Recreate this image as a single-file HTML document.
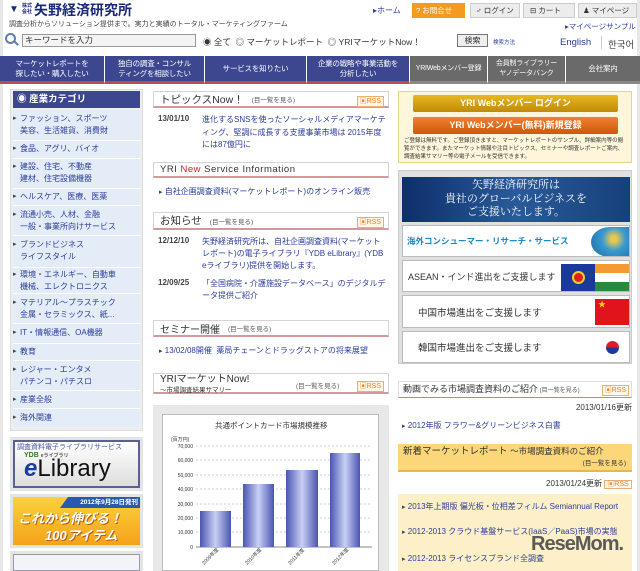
<!DOCTYPE html>
<html><head><meta charset="utf-8">
<style>
*{margin:0;padding:0;box-sizing:border-box}
body{width:640px;height:571px;overflow:hidden;background:#fff;font-family:"Liberation Sans","Noto Sans CJK JP",sans-serif;font-size:9px;color:#333;position:relative}
.a{position:absolute;white-space:nowrap}
a,.lk{color:#2a3d9a;text-decoration:none}
.nav div{position:absolute;top:56px;height:28px;color:#fff;font-size:7.5px;line-height:10px;text-align:center;display:flex;align-items:center;justify-content:center;border-right:1px solid #fff;border-bottom:3px solid #b94c4c;white-space:nowrap;letter-spacing:-.2px}
.blue{background:#3c4790}
.gray{background:#6a6a6a;border-bottom-color:#888!important}
.hd{position:absolute;left:153px;width:236px;background:#fff;border:1px solid #d4d4d4;border-bottom:2px solid #d49a9a;font-size:11px;color:#333;padding-left:6px;display:flex;align-items:center;white-space:nowrap}
.hd small{font-size:6.5px;color:#555;margin-left:8px}
.rss{position:absolute;right:4px;top:4px;font-size:7px;color:#f08020;border:1px solid #e9b070;background:#fff5e8;padding:0 2px;line-height:9px}
.cat{position:absolute;left:13px;width:127px;font-size:8px;color:#2a3d9a;line-height:12px;padding-left:7px;white-space:nowrap}
.cat:before{content:"▸";position:absolute;left:0;color:#444;font-size:7px}
.sep{position:absolute;left:13px;width:127px;height:1px;background:#fff}
.rb{position:absolute;left:402px;width:228px;background:#fff;border:1px solid #bbb;font-size:9.5px;color:#333;display:flex;align-items:center;white-space:nowrap;overflow:hidden}
</style></head><body>
<div class="a" style="left:0;top:0;width:3px;height:571px;background:#e8e8e8"></div>
<div class="a" style="right:0;top:0;width:3px;height:571px;background:#e8e8e8"></div>

<!-- header -->
<div class="a" style="left:9px;top:4px;font-size:10px;color:#1c2a7a">▼</div>
<div class="a" style="left:22px;top:3px;font-size:5px;line-height:6px;color:#1c2a7a;font-weight:bold">株式<br>会社</div>
<div class="a" style="left:34px;top:0px;font-size:14px;font-weight:bold;color:#1c2a7a">矢野経済研究所</div>
<div class="a" style="left:9px;top:19px;font-size:7px;color:#444">調査分析からソリューション提供まで。実力と実績のトータル・マーケティングファーム</div>
<div class="a" style="left:5px;top:33px;width:11px;height:11px;border:2px solid #5a7fb0;border-radius:50%"></div>
<div class="a" style="left:13px;top:42px;width:6px;height:2px;background:#5a7fb0;transform:rotate(45deg)"></div>
<div class="a" style="left:22px;top:34px;width:174px;height:13px;border:1px solid #999;background:#f4f4f4;font-size:8.5px;line-height:11px;padding-left:2px">キーワードを入力</div>
<div class="a" style="left:203px;top:36px;font-size:8.5px;color:#333">◉ 全て &nbsp;◎ マーケットレポート &nbsp;◎ YRIマーケットNow！</div>
<div class="a" style="left:457px;top:34px;width:31px;height:13px;border:1px solid #777;background:#eee;font-size:8px;text-align:center;line-height:11px">検索</div>
<div class="a" style="left:493px;top:38px;font-size:5.5px;color:#2a3d9a">検索方法</div>
<div class="a" style="left:560px;top:37px;font-size:9.5px;color:#2a3d9a">English</div>
<div class="a" style="left:601px;top:36px;width:1px;height:13px;background:#ccc"></div>
<div class="a" style="left:608px;top:37px;font-size:9.5px;color:#444">한국어</div>
<div class="a" style="left:373px;top:5px;font-size:8px;color:#2a3d9a">▸ホーム</div>
<div class="a" style="left:412px;top:3px;width:53px;height:15px;background:#f39a20;color:#fff;font-size:7.5px;line-height:15px;padding-left:4px">? お問合せ</div>
<div class="a" style="left:470px;top:3px;width:50px;height:15px;background:#ececec;border:1px solid #ccc;font-size:7.5px;line-height:13px;padding-left:5px">♂ ログイン</div>
<div class="a" style="left:523px;top:3px;width:52px;height:15px;background:#ececec;border:1px solid #ccc;font-size:7.5px;line-height:13px;padding-left:6px">⊟ カート</div>
<div class="a" style="left:578px;top:3px;width:59px;height:15px;background:#ececec;border:1px solid #ccc;font-size:7.5px;line-height:13px;padding-left:4px">♟ マイページ</div>
<div class="a" style="left:565px;top:21px;font-size:7.5px;color:#2a3d9a">▸マイページサンプル</div>

<!-- nav -->
<div class="nav">
<div class="blue" style="left:0;width:105px">マーケットレポートを<br>探したい・購入したい</div>
<div class="blue" style="left:105px;width:100px">独自の調査・コンサル<br>ティングを相談したい</div>
<div class="blue" style="left:205px;width:102px">サービスを知りたい</div>
<div class="blue" style="left:307px;width:103px">企業の戦略や事業活動を<br>分析したい</div>
<div class="gray" style="left:410px;width:78px;font-size:7px">YRIWebメンバー登録</div>
<div class="gray" style="left:488px;width:78px;font-size:7px">会員制ライブラリー<br>ヤノデータバンク</div>
<div class="gray" style="left:566px;width:74px;border-right:none">会社案内</div>
</div>

<!-- left column -->
<div class="a" style="left:10px;top:89px;width:133px;height:342px;background:#eee;border:1px solid #ddd"></div>
<div class="a" style="left:13px;top:91px;width:127px;height:17px;background:#3c4790;color:#fff;font-size:9.5px;font-weight:bold;line-height:17px;padding-left:4px">◉ 産業カテゴリ</div>
<div class="a" style="left:13px;top:110px;width:127px;height:317px;background:#e4ecf8"></div>
<div class="cat" style="top:113px">ファッション、スポーツ<br>美容、生活雑貨、消費財</div><div class="sep" style="top:140px"></div>
<div class="cat" style="top:143px">食品、アグリ、バイオ</div><div class="sep" style="top:158px"></div>
<div class="cat" style="top:161px">建設、住宅、不動産<br>建材、住宅設備機器</div><div class="sep" style="top:188px"></div>
<div class="cat" style="top:191px">ヘルスケア、医療、医薬</div><div class="sep" style="top:205px"></div>
<div class="cat" style="top:209px">流通小売、人材、金融<br>一般・事業所向けサービス</div><div class="sep" style="top:235px"></div>
<div class="cat" style="top:239px">ブランドビジネス<br>ライフスタイル</div><div class="sep" style="top:267px"></div>
<div class="cat" style="top:269px">環境・エネルギー、自動車<br>機械、エレクトロニクス</div><div class="sep" style="top:293px"></div>
<div class="cat" style="top:297px">マテリアル～プラスチック<br>金属・セラミックス、紙...</div><div class="sep" style="top:323px"></div>
<div class="cat" style="top:327px">IT・情報通信、OA機器</div><div class="sep" style="top:343px"></div>
<div class="cat" style="top:346px">教育</div><div class="sep" style="top:360px"></div>
<div class="cat" style="top:364px">レジャー・エンタメ<br>パチンコ・パチスロ</div><div class="sep" style="top:390px"></div>
<div class="cat" style="top:394px">産業全般</div><div class="sep" style="top:408px"></div>
<div class="cat" style="top:412px">海外関連</div>

<div class="a" style="left:10px;top:437px;width:133px;height:54px;background:#e4e4e4"></div>
<div class="a" style="left:13px;top:440px;width:127px;height:48px;background:linear-gradient(#fff,#ddd);border:2px solid #5a6090"></div>
<div class="a" style="left:17px;top:442px;font-size:7px;color:#4a5a9a">調査資料電子ライブラリサービス</div>
<div class="a" style="left:24px;top:452px;font-size:7px;color:#2a7a2a;font-weight:bold">YDB <span style="font-size:5px;color:#555">eライブラリ</span></div>
<div class="a" style="left:24px;top:454px;font-size:24px;line-height:30px;color:#111"><span style="color:#1c3aa0;font-style:italic;font-weight:bold">e</span>Library</div>
<div class="a" style="left:10px;top:494px;width:133px;height:54px;background:#e4e4e4"></div>
<div class="a" style="left:13px;top:497px;width:127px;height:48px;background:linear-gradient(#fbd23a,#f5a21a)"></div>
<div class="a" style="left:60px;top:497px;width:80px;height:11px;background:#2a5ab0;color:#fff;font-size:6.5px;font-weight:bold;line-height:11px;text-align:right;padding-right:2px;clip-path:polygon(10% 0,100% 0,100% 100%,0 100%)">2012年9月28日発刊</div>
<div class="a" style="left:18px;top:508px;font-size:13px;font-weight:bold;font-style:italic;color:#fff;text-shadow:1px 1px 0 #b06010">これから伸びる！</div>
<div class="a" style="left:45px;top:525px;font-size:13px;font-weight:bold;font-style:italic;color:#fff;text-shadow:1px 1px 0 #b06010">100アイテム</div>
<div class="a" style="left:10px;top:551px;width:133px;height:20px;background:#e4e4e4"></div>
<div class="a" style="left:13px;top:554px;width:127px;height:17px;background:#f2f4f8;border:1px solid #99a"></div>

<!-- middle -->
<div class="hd" style="top:91px;height:17px;font-size:10.5px">トピックスNow！<small>(目一覧を見る)</small><span class="rss">▣RSS</span></div>
<div class="a" style="left:158px;top:114px;font-size:8px;font-weight:bold;color:#444">13/01/10</div>
<div class="a lk" style="left:202px;top:114px;font-size:8px;line-height:12.5px;white-space:normal;width:186px">進化するSNSを使ったソーシャルメディアマーケティング、堅調に成長する支援事業市場は 2015年度には87億円に</div>
<div class="hd" style="top:162px;height:16px;font-size:9.5px;letter-spacing:.5px">YRI&nbsp;<span style="color:#d02020">New</span>&nbsp;Service Information</div>
<div class="a lk" style="left:159px;top:186px;font-size:8px"><span style="color:#444;font-size:7px">▸</span> 自社企画調査資料(マーケットレポート)のオンライン販売</div>
<div class="hd" style="top:212px;height:18px;font-size:10.5px">お知らせ<small>(目一覧を見る)</small><span class="rss">▣RSS</span></div>
<div class="a" style="left:158px;top:236px;font-size:8px;font-weight:bold;color:#444">12/12/10</div>
<div class="a lk" style="left:202px;top:236px;font-size:8px;line-height:12px;white-space:normal;width:186px">矢野経済研究所は、自社企画調査資料(マーケットレポート)の電子ライブラリ『YDB eLibrary』(YDB eライブラリ)提供を開始します。</div>
<div class="a" style="left:158px;top:278px;font-size:8px;font-weight:bold;color:#444">12/09/25</div>
<div class="a lk" style="left:202px;top:278px;font-size:8px;line-height:12px;white-space:normal;width:186px">「全国病院・介護施設データベース」のデジタルデータ提供ご紹介</div>
<div class="hd" style="top:320px;height:17px;font-size:10px">セミナー開催<small>(目一覧を見る)</small></div>
<div class="a lk" style="left:159px;top:345px;font-size:8px"><span style="color:#444;font-size:7px">▸</span> 13/02/08開催&nbsp; 薬局チェーンとドラッグストアの将来展望</div>
<div class="hd" style="top:373px;height:21px;display:block;padding-top:1px;line-height:10px;font-size:10px">YRIマーケットNow!<br><span style="font-size:6.5px">～市場調査結果サマリー</span><span style="position:absolute;left:142px;top:8px;font-size:6.5px;color:#555">(目一覧を見る)</span><span class="rss" style="top:7px">▣RSS</span></div>
<div class="a" style="left:153px;top:405px;width:236px;height:166px;background:#e8e8e8"></div>
<div class="a" style="left:162px;top:414px;width:217px;height:157px;background:#fff;border:1px solid #bbb"></div>
<div class="a" style="left:215px;top:420px;font-size:7.5px;color:#333">共通ポイントカード市場規模推移</div>
<div class="a" style="left:171px;top:436px;font-size:5px">(百万円)</div>
<svg class="a" style="left:162px;top:440px" width="217" height="131">
<g font-size="5" fill="#333" font-family="Liberation Sans" text-anchor="end">
<text x="31" y="8">70,000</text><text x="31" y="22">60,000</text><text x="31" y="37">50,000</text><text x="31" y="51">40,000</text><text x="31" y="66">30,000</text><text x="31" y="80">20,000</text><text x="31" y="94">10,000</text><text x="31" y="109">0</text></g>
<g stroke="#ccc" stroke-dasharray="2,2"><line x1="34" y1="6" x2="210" y2="6"/><line x1="34" y1="20" x2="210" y2="20"/><line x1="34" y1="35" x2="210" y2="35"/><line x1="34" y1="49" x2="210" y2="49"/><line x1="34" y1="64" x2="210" y2="64"/><line x1="34" y1="78" x2="210" y2="78"/><line x1="34" y1="92" x2="210" y2="92"/></g>
<line x1="34" y1="107" x2="210" y2="107" stroke="#888"/>
<defs><linearGradient id="g"><stop offset="0" stop-color="#4a55b0"/><stop offset=".5" stop-color="#c8d0f5"/><stop offset="1" stop-color="#4a55b0"/></linearGradient></defs>
<rect x="38" y="71" width="31" height="36" fill="url(#g)"/>
<rect x="81" y="44" width="31" height="63" fill="url(#g)"/>
<rect x="124" y="30" width="32" height="77" fill="url(#g)"/>
<rect x="168" y="13" width="30" height="94" fill="url(#g)"/>
<g font-size="5" fill="#333" font-family="Liberation Sans,Noto Sans CJK JP">
<text transform="translate(42,125) rotate(-45)">2009年度</text><text transform="translate(85,125) rotate(-45)">2010年度</text><text transform="translate(128,125) rotate(-45)">2011年度</text><text transform="translate(172,125) rotate(-45)">2012年度</text></g>
</svg>

<!-- right -->
<div class="a" style="left:398px;top:91px;width:234px;height:72px;background:#fdf6da;border:1px solid #e8d58a"></div>
<div class="a" style="left:413px;top:95px;width:205px;height:17px;background:linear-gradient(#e8b820,#c08a08);color:#fff;font-size:9px;font-weight:bold;text-align:center;line-height:17px;border-radius:2px">YRI Webメンバー ログイン</div>
<div class="a" style="left:413px;top:117px;width:205px;height:17px;background:linear-gradient(#f08030,#d05808);color:#fff;font-size:9px;font-weight:bold;text-align:center;line-height:17px;border-radius:2px">YRI Webメンバー(無料)新規登録</div>
<div class="a" style="left:404px;top:137px;width:224px;font-size:5.5px;line-height:8px;white-space:normal;color:#333">ご登録は無料です。ご登録頂きますと、マーケットレポートのサンプル、詳細案内等の閲覧ができます。またマーケット情報や注目トピックス、セミナーや調査レポートご案内、調査結果サマリー等の電子メールを受信できます。</div>
<div class="a" style="left:398px;top:170px;width:234px;height:194px;background:#e0e0e0;border:1px solid #ccc"></div>
<div class="a" style="left:402px;top:177px;width:228px;height:45px;background:linear-gradient(90deg,#0d2f6a,#2a5a9a,#16407a);color:#fff;font-family:'Liberation Serif','Noto Serif CJK SC',serif;font-size:11px;line-height:13.5px;text-align:center;padding-top:2px">矢野経済研究所は<br>貴社のグローバルビジネスを<br>ご支援いたします。</div>
<div class="rb" style="top:225px;height:32px;color:#1a8ac8;font-weight:bold;font-size:8.5px;padding-left:4px">海外コンシューマー・リサーチ・サービス<div style="position:absolute;right:0;top:1px;width:38px;height:30px;border-radius:50% 0 0 50%;background:radial-gradient(circle at 60% 40%,#e8c850 10%,#3a9ad0 40%,#1a6aa0)"></div></div>
<div class="rb" style="top:260px;height:32px;padding-left:5px;font-size:9px">ASEAN・インド進出をご支援します
<div style="position:absolute;right:34px;top:3px;width:34px;height:27px;background:#1a3a9a"><div style="margin:7px auto;width:13px;height:13px;border-radius:50%;background:#e02020;border:2px solid #f0d020"></div></div>
<div style="position:absolute;right:0;top:3px;width:34px;height:27px;background:linear-gradient(#f39a30 33%,#fff 33%,#fff 66%,#2a8a3a 66%)"></div></div>
<div class="rb" style="top:295px;height:33px;padding-left:15px">中国市場進出をご支援します<div style="position:absolute;right:0;top:3px;width:34px;height:26px;background:#e0141a;color:#ffd800;font-size:8px;padding-left:3px">★</div></div>
<div class="rb" style="top:331px;height:32px;padding-left:15px">韓国市場進出をご支援します<div style="position:absolute;right:0;top:3px;width:34px;height:26px;background:#fff"><div style="margin:6px auto;width:13px;height:13px;border-radius:50%;background:linear-gradient(#e01a2a 50%,#1a3a9a 50%)"></div></div></div>

<div class="a" style="left:398px;top:381px;width:234px;height:17px;border:1px solid #ddd;border-bottom:1px solid #d08080;font-size:9px;padding-left:4px;line-height:15px">動画でみる市場調査資料のご紹介<span style="font-size:6px;color:#555"> (目一覧を見る)</span><span class="rss" style="top:3px;right:2px">▣RSS</span></div>
<div class="a" style="right:8px;top:402px;font-size:8px;color:#333">2013/01/16更新</div>
<div class="a lk" style="left:402px;top:420px;font-size:8px"><span style="color:#444;font-size:7px">▸</span> 2012年版 フラワー&amp;グリーンビジネス白書</div>
<div class="a" style="left:398px;top:444px;width:234px;height:28px;background:#fbd77a;border-bottom:2px solid #e6b84a;font-size:9.5px;padding-left:5px;line-height:14px;color:#333">新着マーケットレポート <span style="font-size:8.5px">～市場調査資料のご紹介</span><div style="text-align:right;font-size:6.5px;padding-right:6px;line-height:10px">(目一覧を見る)</div></div>
<div class="a" style="left:546px;top:478px;font-size:8px;color:#333">2013/01/24更新 <span style="font-size:7px;color:#f08020;border:1px solid #e9b070;background:#fff5e8;padding:0 2px">▣RSS</span></div>
<div class="a" style="left:398px;top:494px;width:234px;height:77px;background:#fdf0c8"></div>
<div class="a lk" style="left:402px;top:501px;width:226px;font-size:8px;line-height:12px;white-space:normal"><span style="color:#444;font-size:7px">▸</span> 2013年上期版 偏光板・位相差フィルム Semiannual Report</div>
<div class="a lk" style="left:402px;top:526px;width:226px;font-size:8px;line-height:12px;white-space:normal"><span style="color:#444;font-size:7px">▸</span> 2012-2013 クラウド基盤サービス(IaaS／PaaS)市場の実態</div>
<div class="a lk" style="left:402px;top:553px;width:226px;font-size:8px;line-height:12px"><span style="color:#444;font-size:7px">▸</span> 2012-2013 ライセンスブランド全調査</div>
<div class="a" style="left:531px;top:533px;font-size:20px;font-weight:bold;color:#4a4a4a;opacity:.9;letter-spacing:-1px">ReseMom.</div>
</body></html>
